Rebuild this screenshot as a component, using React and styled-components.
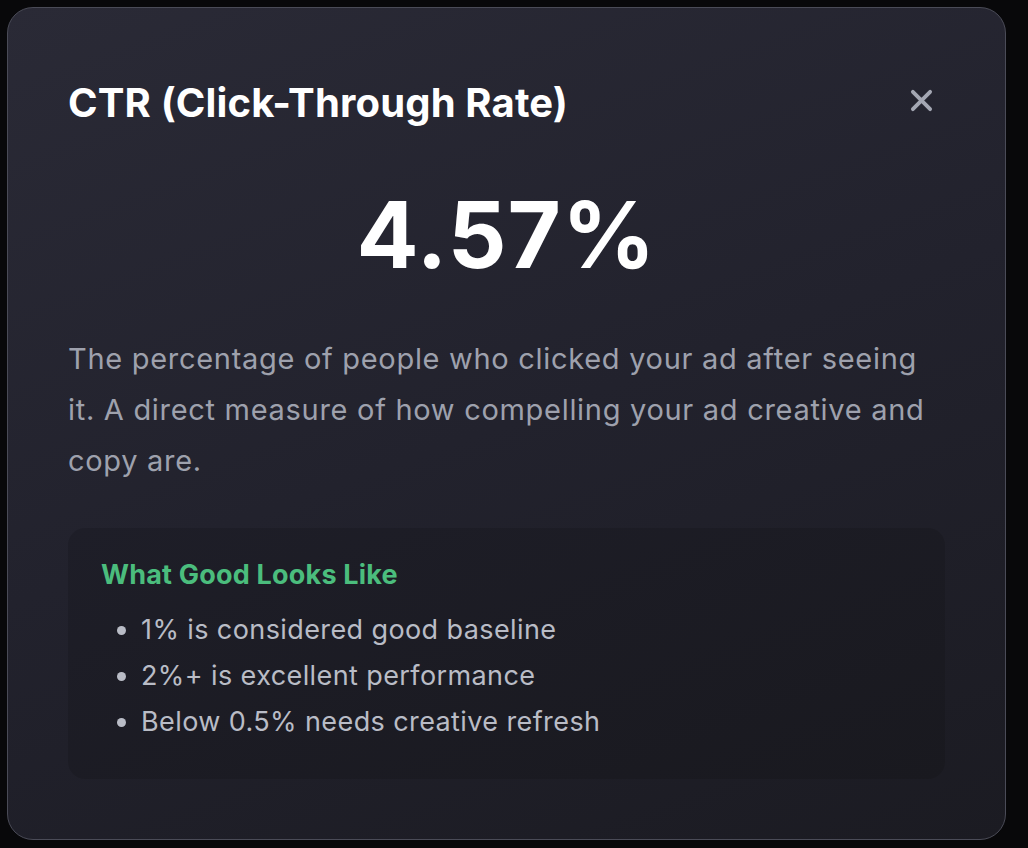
import React from "react";
import styled, { createGlobalStyle } from "styled-components";

const Global = createGlobalStyle`
  html, body { margin: 0; padding: 0; background: #08080a; }
  body { font-family: Inter, "Noto Sans", sans-serif; -webkit-font-smoothing: antialiased; }
  #root { min-height: 848px; }
`;

const Backdrop = styled.div`
  width: 1028px;
  height: 848px;
  box-sizing: border-box;
  padding: 7px 22px 8px 7px;
  background: #08080a;
  overflow: hidden;
`;

const Modal = styled.div`
  box-sizing: border-box;
  width: 999px;
  height: 833px;
  border-radius: 26px;
  border: 1px solid #4a4b57;
  background: linear-gradient(160deg, #2a2a36 0%, #22222d 50%, #1b1b22 100%);
  padding: 70px 60px 60px 60px;
  display: flex;
  flex-direction: column;
`;

const Header = styled.div`
  display: flex;
  align-items: center;
  justify-content: space-between;
  height: 50px;
`;

const Title = styled.h2`
  margin: 0;
  font-size: 40px;
  font-weight: 700;
  color: #ffffff;
  letter-spacing: 0.15px;
`;

const Close = styled.button`
  background: none;
  border: none;
  padding: 0;
  margin-right: 10px;
  margin-bottom: 4px;
  width: 28px;
  height: 28px;
  display: flex;
  align-items: center;
  justify-content: center;
  color: #a4a7b3;
  cursor: pointer;
`;

const Value = styled.div`
  margin-top: 62px;
  text-align: center;
  font-size: 92px;
  font-weight: 700;
  line-height: 1;
  color: #ffffff;
  letter-spacing: 1px;
`;

const Desc = styled.p`
  margin: 52px 0 0 0;
  font-size: 29px;
  line-height: 51px;
  letter-spacing: 0.7px;
  color: #9ea1ad;
  font-weight: 400;
`;

const GoodBox = styled.div`
  margin-top: 42px;
  box-sizing: border-box;
  height: 253px;
  border-radius: 17px;
  background: linear-gradient(160deg, #1e1e28 0%, #19191f 100%);
  padding: 30px 33px;
`;

const GoodTitle = styled.h3`
  margin: 0;
  font-size: 27px;
  font-weight: 700;
  color: #4bbd7d;
  line-height: 34px;
  letter-spacing: 0.2px;
`;

const List = styled.ul`
  margin: 15px 0 0 0;
  padding-left: 40px;
  color: #b9bcc6;
  font-size: 27px;
  line-height: 46px;
  letter-spacing: 0.4px;
`;

const Item = styled.li`
  padding-left: 0;
`;

export default function App() {
  return (
    <>
      <Global />
      <Backdrop>
        <Modal>
          <Header>
            <Title>CTR (Click-Through Rate)</Title>
            <Close aria-label="Close">
              <svg width="23" height="23" viewBox="0 0 24 24" fill="none" stroke="currentColor" strokeWidth="4" strokeLinecap="round">
                <path d="M3 3L21 21M21 3L3 21" />
              </svg>
            </Close>
          </Header>
          <Value>4.57%</Value>
          <Desc>
            The percentage of people who clicked your ad after seeing it. A direct measure of how compelling your ad creative and copy are.
          </Desc>
          <GoodBox>
            <GoodTitle>What Good Looks Like</GoodTitle>
            <List>
              <Item>1% is considered good baseline</Item>
              <Item>2%+ is excellent performance</Item>
              <Item>Below 0.5% needs creative refresh</Item>
            </List>
          </GoodBox>
        </Modal>
      </Backdrop>
    </>
  );
}
